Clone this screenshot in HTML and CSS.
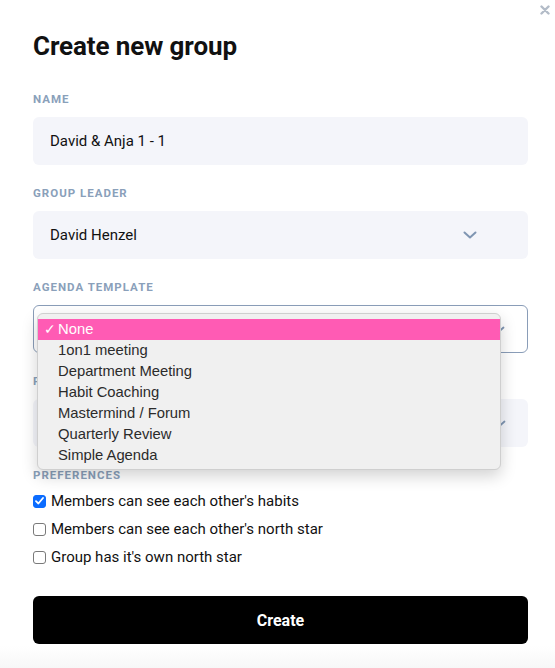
FILE: index.html
```html
<!DOCTYPE html>
<html lang="en">
<head>
  <meta charset="UTF-8">
  <title>Create new group</title>
  <meta name="viewport" content="width=device-width, initial-scale=1.0">
  <link rel="stylesheet" href="styles.css">
</head>
<body>
<div class="modal">
  <button type="button" class="close-btn" aria-label="Close">
    <svg width="10" height="10" viewBox="0 0 10 10"><path d="M1.5 1.5 L8.5 8.5 M8.5 1.5 L1.5 8.5" stroke="#b3bcc8" stroke-width="2.4" stroke-linecap="round"/></svg>
  </button>
  <h1>Create new group</h1>

  <div class="form-group">
    <label>Name</label>
    <div class="field">David &amp; Anja 1 - 1</div>
  </div>

  <div class="form-group">
    <label>Group Leader</label>
    <div class="field select">
      <span>David Henzel</span>
      <svg class="chevron" width="14" height="8" viewBox="0 0 14 8"><path d="M1.5 1.5 L7 6.5 L12.5 1.5" fill="none" stroke="#7f95b2" stroke-width="2" stroke-linecap="round" stroke-linejoin="round"/></svg>
    </div>
  </div>

  <div class="form-group">
    <label>Agenda Template</label>
    <div class="dropdown-wrap">
      <div class="field select native focused">
        <span></span>
        <svg class="chevron" width="12" height="7" viewBox="0 0 12 7"><path d="M1.5 1.5 L6 5.5 L10.5 1.5" fill="none" stroke="#7f95b2" stroke-width="1.8" stroke-linecap="round" stroke-linejoin="round"/></svg>
      </div>
      <ul class="dropdown">
        <li class="selected"><span class="tick">✓</span>None</li>
        <li>1on1 meeting</li>
        <li>Department Meeting</li>
        <li>Habit Coaching</li>
        <li>Mastermind / Forum</li>
        <li>Quarterly Review</li>
        <li>Simple Agenda</li>
      </ul>
    </div>
  </div>

  <div class="form-group">
    <label>P</label>
    <div class="field select native">
      <span></span>
      <svg class="chevron" width="12" height="7" viewBox="0 0 12 7"><path d="M1.5 1.5 L6 5.5 L10.5 1.5" fill="none" stroke="#7f95b2" stroke-width="1.8" stroke-linecap="round" stroke-linejoin="round"/></svg>
    </div>
  </div>

  <div class="prefs">
    <label>Preferences</label>
    <div class="check-row">
      <span class="box checked">
        <svg width="9" height="8" viewBox="0 0 9 8"><path d="M1 4.2 L3.4 6.5 L8 1" fill="none" stroke="#fff" stroke-width="1.8" stroke-linecap="round" stroke-linejoin="round"/></svg>
      </span>
      Members can see each other's habits
    </div>
    <div class="check-row"><span class="box"></span>Members can see each other's north star</div>
    <div class="check-row"><span class="box"></span>Group has it's own north star</div>
  </div>

  <button type="button" class="btn">Create</button>
</div>
</body>
</html>
```
FILE: styles.css
```css
* { box-sizing: border-box; }
body {
  margin: 0;
  background: #fff;
  font-family: 'Roboto', 'Inter', sans-serif;
  color: #111;
}
.modal {
  position: relative;
  min-height: 668px;
  padding: 30px 27px 0 33px;
  background: linear-gradient(to bottom, #fff 0, #fff 646px, #f7f7f7 668px);
}
.close-btn {
  position: absolute;
  top: 5px;
  right: 5px;
  border: none;
  background: none;
  padding: 0;
  line-height: 0;
  cursor: pointer;
}
h1 {
  margin: 0 0 30px;
  font-size: 26px;
  line-height: 32px;
  font-weight: 700;
  letter-spacing: -0.1px;
}
.form-group {
  margin-bottom: 21px;
}
label {
  display: block;
  font-size: 11.5px;
  line-height: 14px;
  font-weight: 700;
  letter-spacing: 1px;
  text-transform: uppercase;
  color: #8aa0ba;
  margin-bottom: 11px;
}
.field {
  height: 48px;
  padding: 0 17px;
  display: flex;
  align-items: center;
  background: #f4f5fa;
  border-radius: 6px;
  font-size: 15px;
  color: #111;
}
.select {
  justify-content: space-between;
  padding-right: 51px;
}
.select.native {
  padding-right: 22px;
}
.focused {
  background: #fff;
  border: 1px solid #8a9db8;
}
.dropdown-wrap {
  position: relative;
}
.dropdown {
  position: absolute;
  top: 8px;
  left: 4px;
  width: 464px;
  margin: 0;
  padding: 5px 0 3px;
  list-style: none;
  background: #f0f0f0;
  border: 1px solid #cfcfcf;
  border-radius: 6px;
  box-shadow: 0 6px 16px rgba(0,0,0,0.18);
  font-family: 'Liberation Sans', Arial, sans-serif;
  font-size: 14.8px;
  color: #2b2b2b;
  z-index: 10;
}
.dropdown li {
  position: relative;
  height: 21px;
  line-height: 21px;
  padding-left: 20px;
}
.dropdown li.selected {
  background: #ff5bb4;
  color: #fff;
}
.tick {
  position: absolute;
  left: 6px;
  font-size: 14px;
}
.prefs label {
  margin-bottom: 5px;
}
.check-row {
  display: flex;
  align-items: center;
  height: 28px;
  font-size: 15px;
  color: #111;
}
.box {
  width: 13px;
  height: 13px;
  margin-right: 5px;
  border: 1px solid #7a7a7a;
  border-radius: 3px;
  background: #fff;
  display: flex;
  align-items: center;
  justify-content: center;
}
.box.checked {
  background: #0b6cff;
  border-color: #0b6cff;
}
.btn {
  display: block;
  width: 100%;
  height: 48px;
  margin-top: 25px;
  border: none;
  border-radius: 6px;
  background: #000;
  color: #fff;
  font-family: 'Roboto', 'Inter', sans-serif;
  font-size: 16px;
  font-weight: 700;
  cursor: pointer;
}
```
